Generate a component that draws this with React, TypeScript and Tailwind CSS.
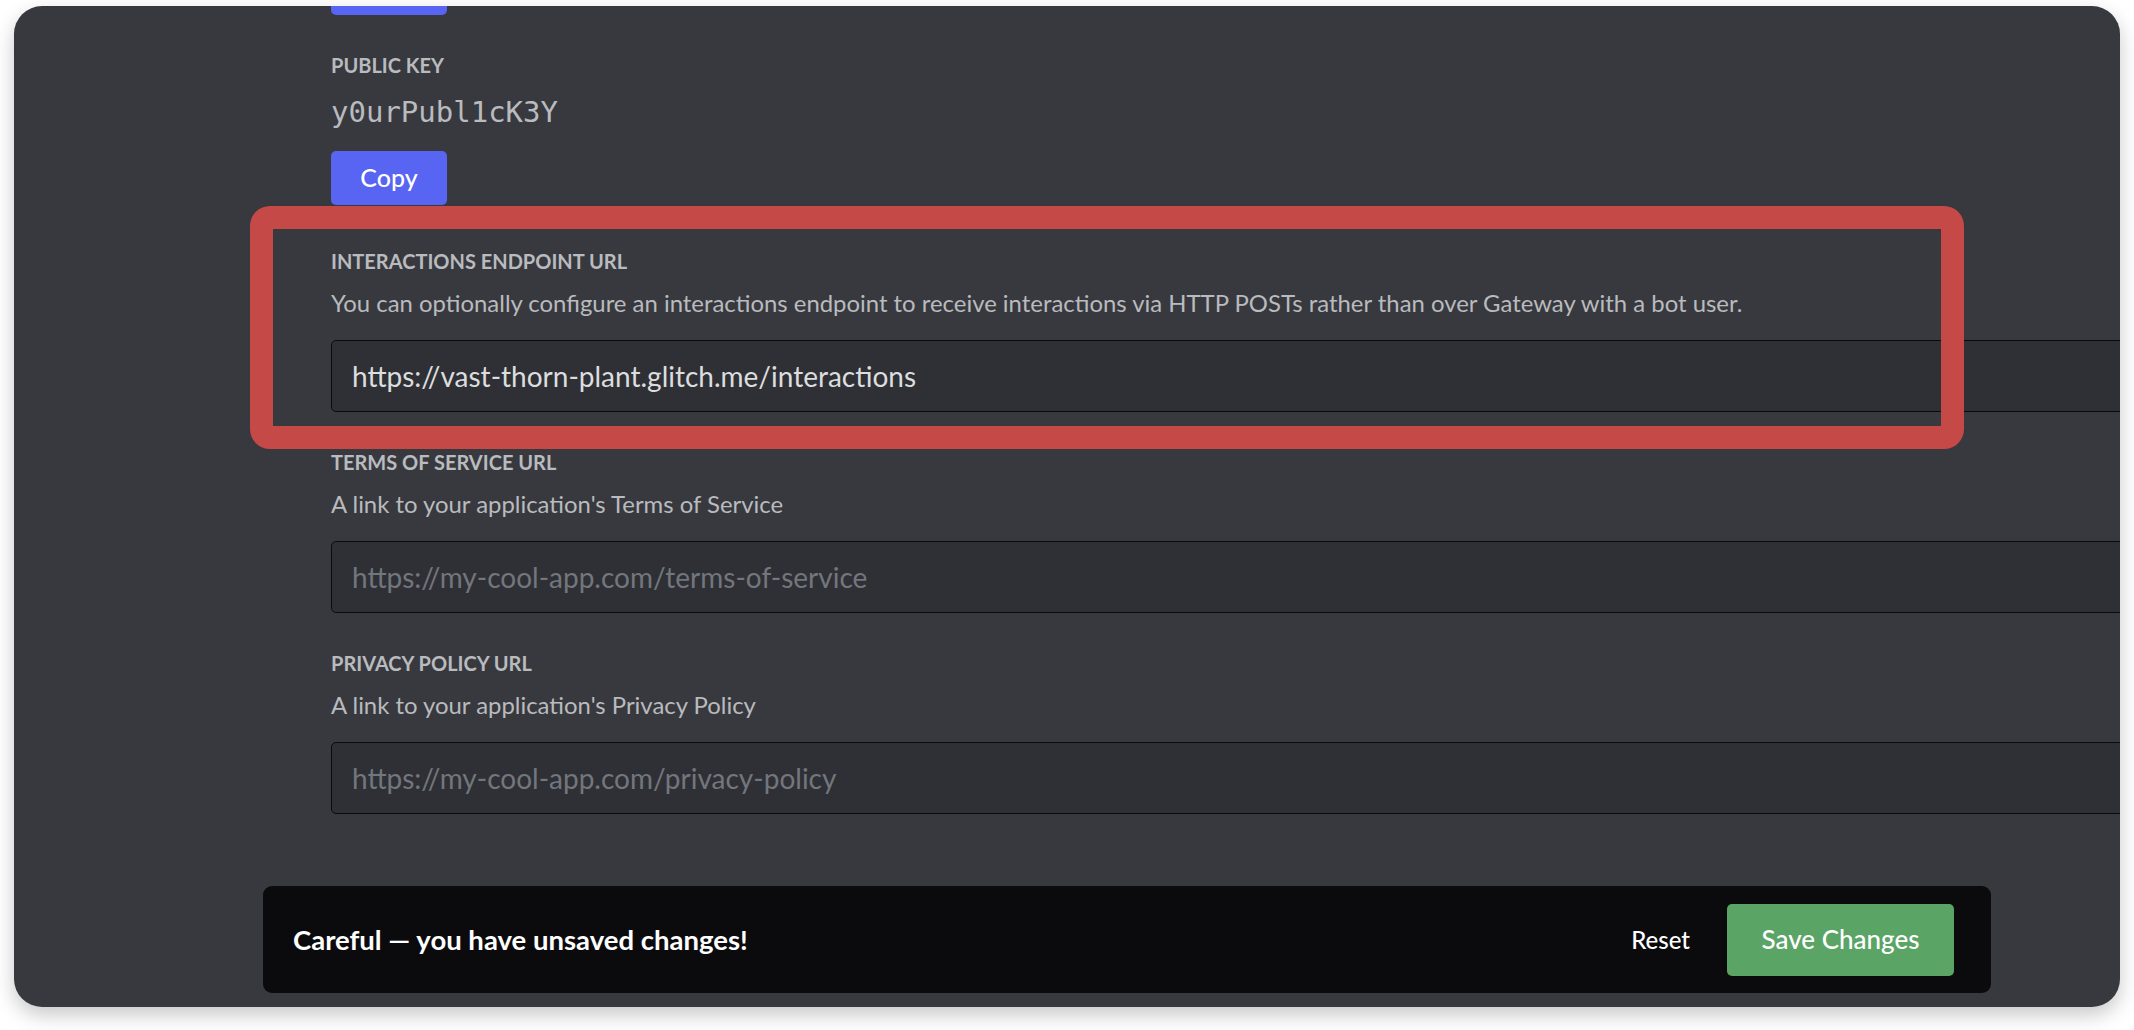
import React from 'react'

const LABEL = "font-['Lato',sans-serif] text-[20px] leading-[20px] font-bold uppercase text-[#b9bbbe]"
const HINT = "font-['Lato',sans-serif] text-[23.9px] leading-[24px] text-[#b9bbbe]"
const INPUT =
  "block w-[1800px] h-[72px] rounded-[5px] border border-[#0a0a0b] bg-[#2f3035] pl-[20px] font-['Lato',sans-serif] text-[28px] text-[#dcddde] placeholder:text-[#72767d] outline-none"

function Field({
  label,
  hint,
  value,
  placeholder,
}: {
  label: string
  hint: string
  value?: string
  placeholder?: string
}) {
  return (
    <div>
      <div className={LABEL}>{label}</div>
      <p className={`${HINT} mt-[20px]`}>{hint}</p>
      <input
        readOnly
        value={value ?? ''}
        placeholder={placeholder}
        className={`${INPUT} mt-[25px]`}
      />
    </div>
  )
}

export default function App() {
  return (
    <div className="w-[2134px] h-[1030px] bg-white pt-[6px] px-[14px]">
      <div className="h-[1001px] rounded-[28px] bg-[#38393e] overflow-hidden shadow-[0_8px_20px_rgba(0,0,0,0.22)]">
        <div className="pl-[317px]">
          {/* button from the section above, scrolled out of view */}
          <div className="-mt-[45px] w-[116px] h-[54px] rounded-[5px] bg-[#5865f2]" />

          <div className={`${LABEL} mt-[40px]`}>Public Key</div>
          <div className="mt-[23px] font-['DejaVu_Sans_Mono',monospace] text-[29px] leading-[29px] text-[#b9bbbe]">
            y0urPubl1cK3Y
          </div>
          <button className="mt-[24px] w-[116px] h-[54px] rounded-[5px] bg-[#5865f2] font-['Lato',sans-serif] text-[25px] font-medium text-white">
            Copy
          </button>

          {/* highlighted field */}
          <div className="relative mt-[46px]">
            <Field
              label="Interactions Endpoint URL"
              hint="You can optionally configure an interactions endpoint to receive interactions via HTTP POSTs rather than over Gateway with a bot user."
              value="https://vast-thorn-plant.glitch.me/interactions"
            />
            <div className="absolute -left-[81px] -top-[45px] w-[1714px] h-[243px] rounded-[20px] border-[23px] border-[#c54a47] pointer-events-none" />
          </div>

          <div className="mt-[40px]">
            <Field
              label="Terms of Service URL"
              hint="A link to your application's Terms of Service"
              placeholder="https://my-cool-app.com/terms-of-service"
            />
          </div>

          <div className="mt-[40px]">
            <Field
              label="Privacy Policy URL"
              hint="A link to your application's Privacy Policy"
              placeholder="https://my-cool-app.com/privacy-policy"
            />
          </div>
        </div>

        {/* unsaved changes notice */}
        <div className="mt-[72px] ml-[249px] w-[1728px] h-[107px] rounded-[9px] bg-[#0b0b0d] flex items-center justify-between pl-[30px] pr-[37px] font-['Lato',sans-serif]">
          <span className="text-[27.5px] font-bold text-white">Careful — you have unsaved changes!</span>
          <div className="flex items-center gap-[37px]">
            <button className="text-[24px] font-medium text-white">Reset</button>
            <button className="w-[227px] h-[72px] rounded-[5px] bg-[#5aa466] text-[26px] font-medium text-white">
              Save Changes
            </button>
          </div>
        </div>
      </div>
    </div>
  )
}
